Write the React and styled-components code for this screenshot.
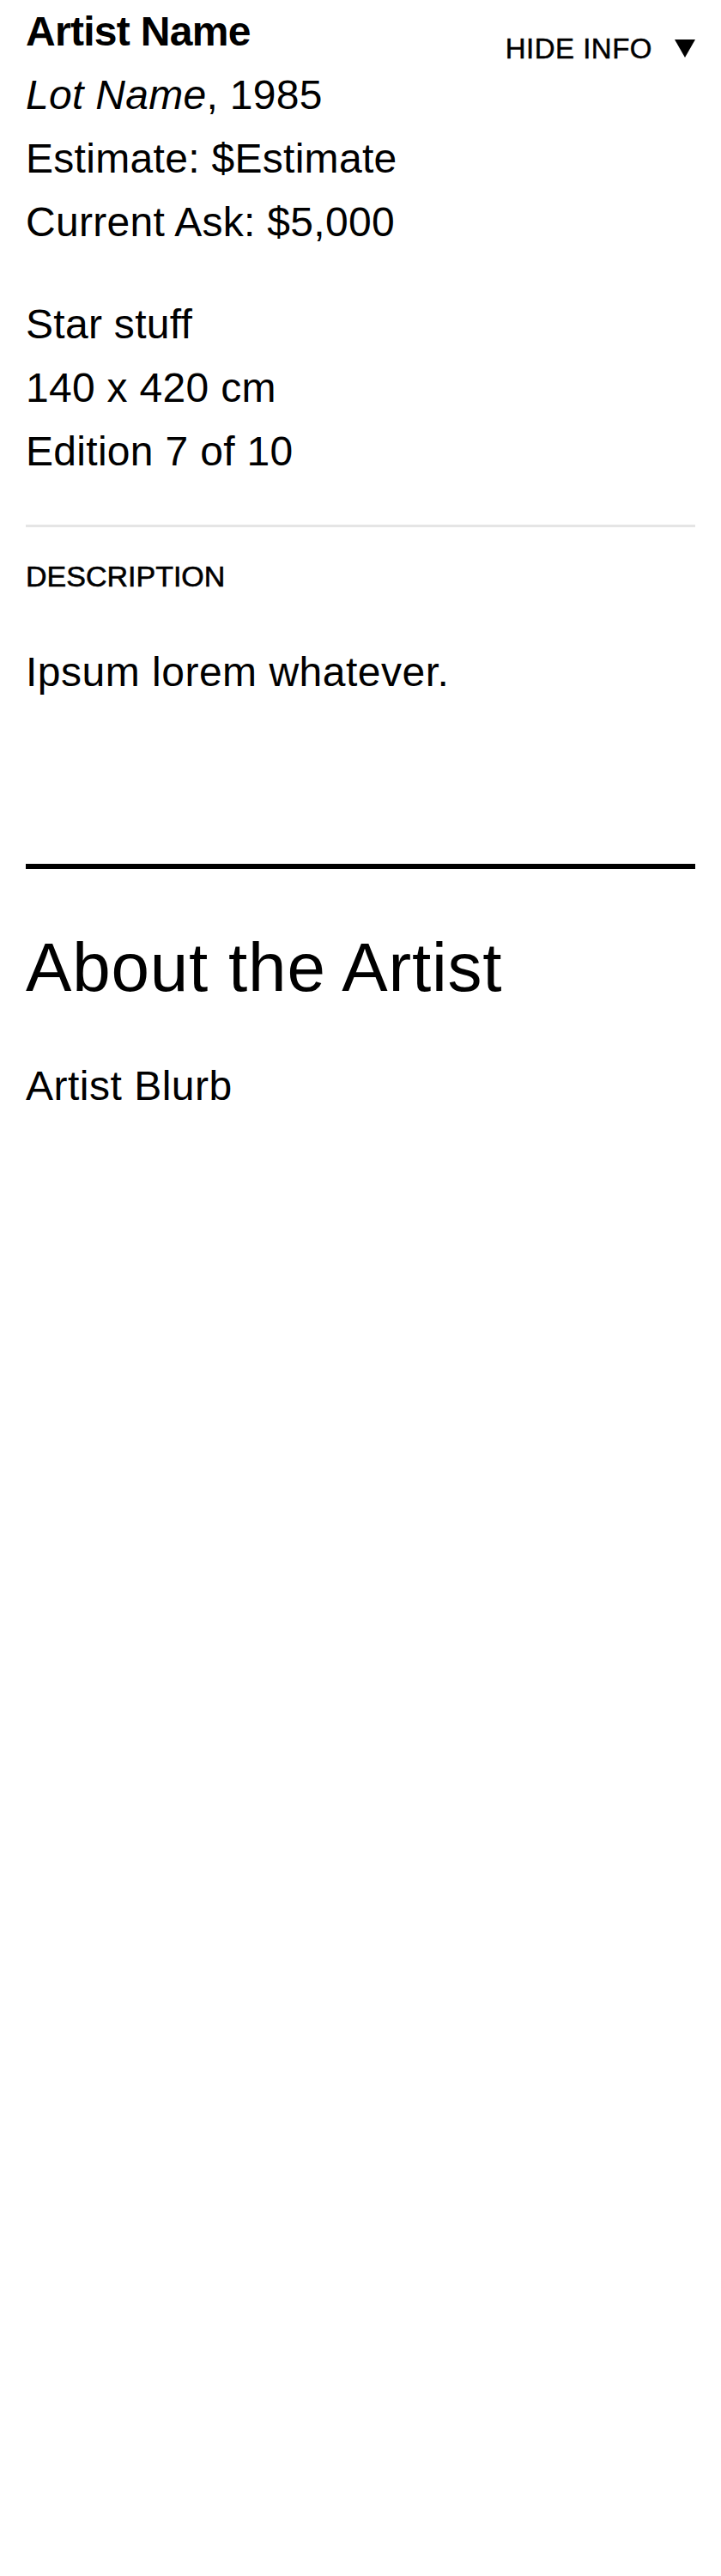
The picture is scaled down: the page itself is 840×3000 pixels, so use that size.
import React from "react";
import styled, { createGlobalStyle } from "styled-components";

const GlobalStyle = createGlobalStyle`
  html, body {
    margin: 0;
    padding: 0;
    background: #ffffff;
  }
  body {
    font-family: "Liberation Sans", Arial, sans-serif;
    color: #000000;
  }
  * { box-sizing: border-box; }
`;

const Page = styled.main`
  padding: 0 30px;
  width: 840px;
`;

const Header = styled.section`
  display: flex;
  justify-content: space-between;
  align-items: flex-start;
`;

const InfoColumn = styled.div`
  display: flex;
  flex-direction: column;
  gap: 45px;
`;

const LineGroup = styled.div`
  display: flex;
  flex-direction: column;
`;

const Line = styled.div`
  font-size: 48px;
  line-height: 74px;
  font-weight: ${(p) => (p.$bold ? 700 : 400)};
  letter-spacing: ${(p) => (p.$bold ? "-0.7px" : "0.3px")};
`;

const Italic = styled.em`
  font-style: italic;
`;

const ToggleButton = styled.button`
  display: flex;
  align-items: center;
  gap: 26px;
  margin-top: 40px;
  padding: 0;
  border: none;
  background: none;
  font-family: "Liberation Sans", Arial, sans-serif;
  font-size: 33px;
  line-height: 33px;
  color: #000;
  -webkit-text-stroke: 0.5px #000;
  letter-spacing: 0.5px;
  cursor: pointer;
`;

const Divider = styled.hr`
  margin: ${(p) => p.$mt}px 0 0 0;
  border: none;
  height: ${(p) => p.$thickness}px;
  background: ${(p) => p.$color};
`;

const SectionLabel = styled.h3`
  margin: 37px 0 0 0;
  font-size: 34px;
  line-height: 41px;
  font-weight: 400;
  -webkit-text-stroke: 0.6px #000;
  letter-spacing: 0;
`;

const BodyText = styled.p`
  margin: ${(p) => p.$mt}px 0 0 0;
  font-size: 48px;
  line-height: 74px;
  font-weight: 400;
  letter-spacing: 0.5px;
`;

const SectionTitle = styled.h2`
  margin: 67px 0 0 0;
  font-size: 80px;
  line-height: 96px;
  font-weight: 400;
  letter-spacing: 0.8px;
`;

const Triangle = () => (
  <svg width="24" height="21" viewBox="0 0 24 21" aria-hidden="true">
    <polygon points="0,0 24,0 12,21" fill="#000" />
  </svg>
);

export default function App() {
  return (
    <>
      <GlobalStyle />
      <Page>
        <Header>
          <InfoColumn>
            <LineGroup>
              <Line $bold>Artist Name</Line>
              <Line>
                <Italic>Lot Name</Italic>, 1985
              </Line>
              <Line>Estimate: $Estimate</Line>
              <Line>Current Ask: $5,000</Line>
            </LineGroup>
            <LineGroup>
              <Line>Star stuff</Line>
              <Line>140 x 420 cm</Line>
              <Line>Edition 7 of 10</Line>
            </LineGroup>
          </InfoColumn>
          <ToggleButton type="button">
            HIDE INFO
            <Triangle />
          </ToggleButton>
        </Header>
        <Divider $mt={48} $thickness={3} $color="#e5e5e5" />
        <SectionLabel>DESCRIPTION</SectionLabel>
        <BodyText $mt={54}>Ipsum lorem whatever.</BodyText>
        <Divider $mt={186} $thickness={6} $color="#000" />
        <SectionTitle>About the Artist</SectionTitle>
        <BodyText $mt={53}>Artist Blurb</BodyText>
      </Page>
    </>
  );
}
